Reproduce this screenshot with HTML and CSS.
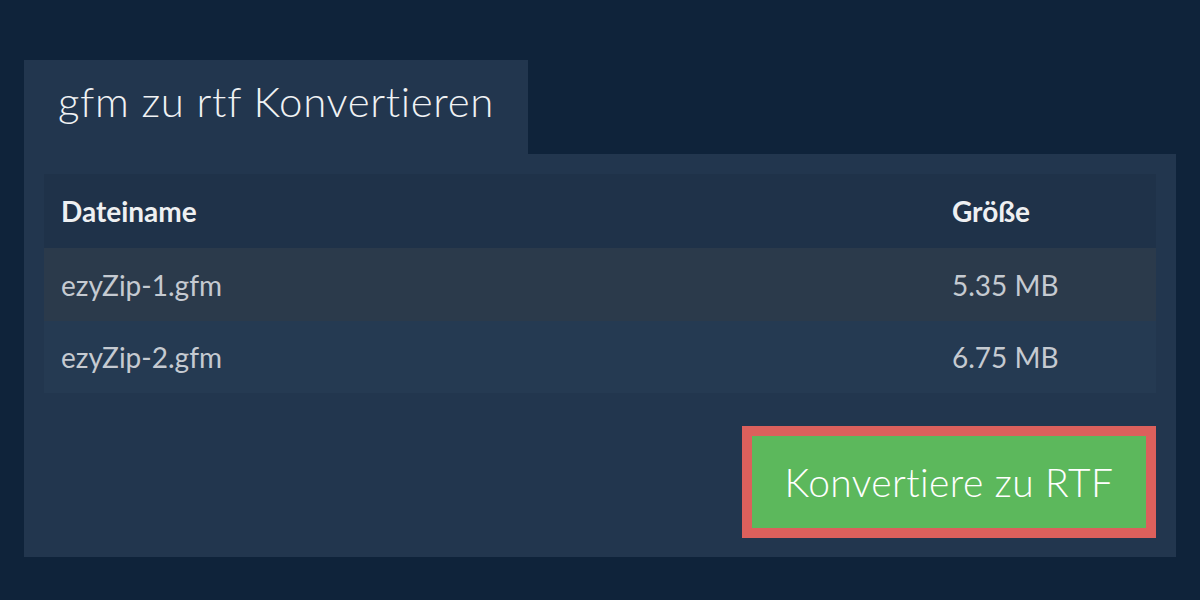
FILE: index.html
```html
<!DOCTYPE html>
<html lang="de">
<head>
<meta charset="utf-8">
<link rel="stylesheet" href="styles.css">
</head>
<body>
<div class="wrap">
  <div class="tab">gfm zu rtf Konvertieren</div>
  <div class="panel">
    <div class="table">
      <div class="row head"><div class="c1">Dateiname</div><div class="c2">Größe</div></div>
      <div class="row odd"><div class="c1">ezyZip-1.gfm</div><div class="c2">5.35 MB</div></div>
      <div class="row even"><div class="c1">ezyZip-2.gfm</div><div class="c2">6.75 MB</div></div>
    </div>
    <div class="actions">
      <button class="btn">Konvertiere zu RTF</button>
    </div>
  </div>
</div>
</body>
</html>
```

FILE: styles.css
```css
html, body {
  margin: 0;
  padding: 0;
  background: #0f233a;
  width: 1200px;
  height: 600px;
  overflow: hidden;
  font-family: Lato, "Open Sans", sans-serif;
}
.wrap {
  padding: 60px 24px 0 24px;
}
.tab {
  width: 504px;
  height: 94px;
  box-sizing: border-box;
  background: #22364e;
  color: #f0f2f4;
  font-size: 42px;
  font-weight: 300;
  letter-spacing: 0.65px;
  padding: 17px 0 0 34px;
  line-height: 48px;
}
.panel {
  background: #22364e;
  padding: 20px 20px 19px 20px;
}
.table {
  display: flex;
  flex-direction: column;
}
.row {
  display: grid;
  grid-template-columns: 1fr 221px;
  align-items: center;
  font-size: 28px;
}
.row > div {
  padding-left: 17px;
}
.head {
  height: 74px;
  background: #1f3249;
  color: #eef0f2;
  font-weight: 700;
}
.odd {
  height: 73px;
  background: #2b3a4b;
  color: #c5cad1;
}
.even {
  height: 72px;
  background: #253a52;
  color: #c5cad1;
}
.actions {
  display: flex;
  justify-content: flex-end;
  padding-top: 33px;
}
.btn {
  width: 414px;
  height: 112px;
  box-sizing: border-box;
  border: 10px solid #dc605c;
  background: #5cb85c;
  color: #ffffff;
  font-family: Lato, "Open Sans", sans-serif;
  font-size: 39px;
  font-weight: 300;
  letter-spacing: 0.4px;
  padding: 0;
  margin: 0;
}
```
